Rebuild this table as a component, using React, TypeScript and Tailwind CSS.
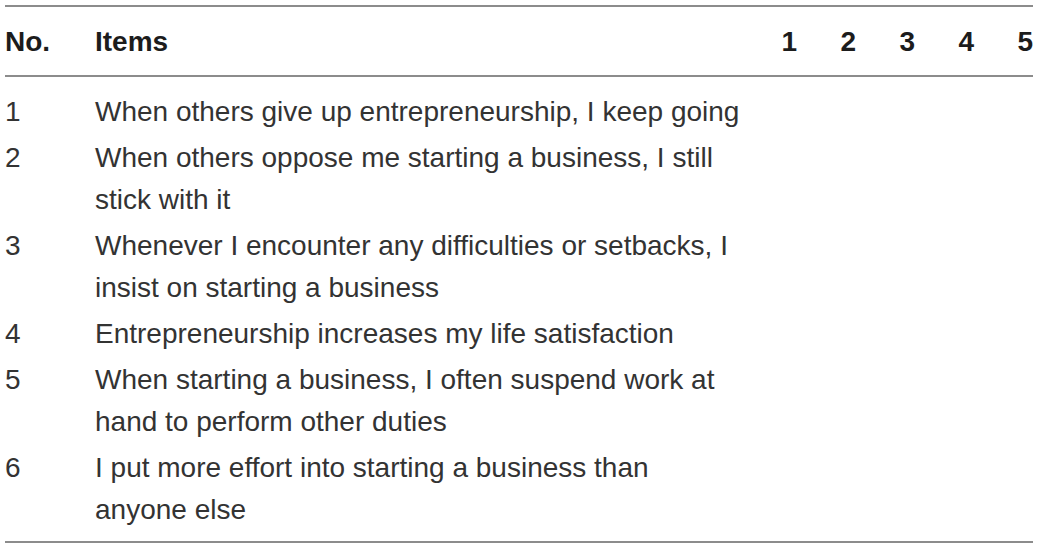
const rows: { no: string; lines: string[] }[] = [
  { no: "1", lines: ["When others give up entrepreneurship, I keep going"] },
  { no: "2", lines: ["When others oppose me starting a business, I still", "stick with it"] },
  { no: "3", lines: ["Whenever I encounter any difficulties or setbacks, I", "insist on starting a business"] },
  { no: "4", lines: ["Entrepreneurship increases my life satisfaction"] },
  { no: "5", lines: ["When starting a business, I often suspend work at", "hand to perform other duties"] },
  { no: "6", lines: ["I put more effort into starting a business than", "anyone else"] },
];

const scale = ["1", "2", "3", "4", "5"];

export default function App() {
  return (
    <div className="min-h-[548px] w-[1039px] bg-white pt-[5px] font-['Liberation_Sans',Arial,sans-serif]">
      <div className="ml-[5px] w-[1028px] border-y-2 border-[#8c8c8c]">
        <div className="grid h-[70px] grid-cols-[90px_1fr_repeat(5,59px)] items-center border-b-2 border-[#8c8c8c] pt-[2px] text-[28px] font-bold text-[#1c1c1c]">
          <div>No.</div>
          <div>Items</div>
          {scale.map((s) => (
            <div key={s} className="text-right">
              {s}
            </div>
          ))}
        </div>

        {/* item rows, two-line items wrap by hand */}
        <div className="pt-[12px] pb-[8px] text-[28px] leading-[42px] text-[#333333]">
          {rows.map((r) => (
            <div key={r.no} className="grid grid-cols-[90px_1fr_repeat(5,59px)] py-[2px]">
              <div>{r.no}</div>
              <div className="whitespace-nowrap">
                {r.lines.map((l) => (
                  <div key={l}>{l}</div>
                ))}
              </div>
              {scale.map((s) => (
                <div key={s} />
              ))}
            </div>
          ))}
        </div>
      </div>
    </div>
  );
}
